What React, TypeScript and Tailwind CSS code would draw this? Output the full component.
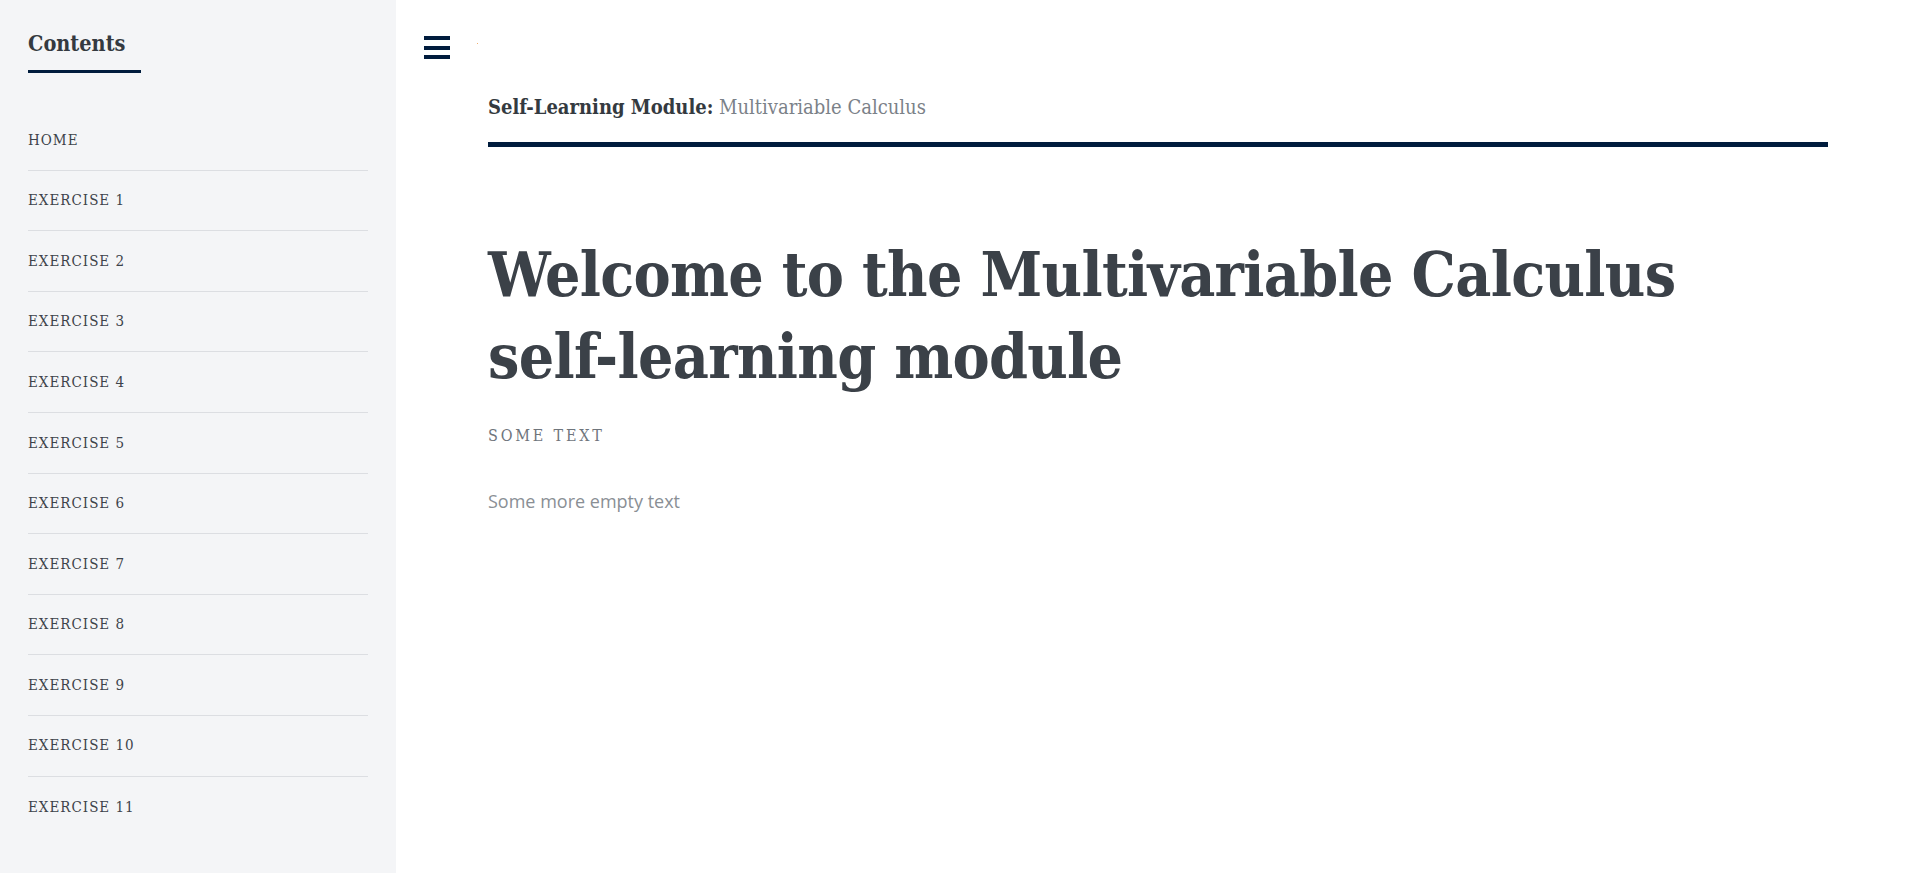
const slab = "font-['DejaVu_Serif_Condensed','DejaVu_Serif',serif]"

const items = ['Home', ...Array.from({ length: 11 }, (_, i) => `Exercise ${i + 1}`)]

export default function App() {
  return (
    <div className="min-h-screen flex bg-white">
      {/* Sidebar */}
      <aside className="w-[396px] shrink-0 bg-[#f4f5f7] px-[28px] pt-[30px]">
        <h2 className={`${slab} font-bold text-[21.5px] leading-[28px] text-[#343a40]`}>Contents</h2>
        <div className="w-[113px] h-[3px] bg-[#001c3d] mt-[12px]" />
        <nav className="mt-[37px]">
          {items.map((it) => (
            <a
              key={it}
              href="#"
              className={`${slab} flex items-center h-[60.6px] border-b border-[#dcdee2] last:border-b-0 text-[15px] uppercase tracking-[1px] text-[#3d434a]`}
            >
              {it}
            </a>
          ))}
        </nav>
      </aside>

      {/* Main */}
      <main className="flex-1 flex flex-col">
        <div className="pl-[28px] pt-[36px] flex items-start gap-[27px]">
          <button className="w-[26px] h-[23px] flex flex-col justify-between">
            <span className="block h-[4px] bg-[#001c3d]" />
            <span className="block h-[4px] bg-[#001c3d]" />
            <span className="block h-[4px] bg-[#001c3d]" />
          </button>
          <span className="block w-[1px] h-[1px] mt-[7px] bg-[#f0b070]" />
        </div>

        <div className="px-[92px]">
          <p className={`${slab} mt-[34px] text-[20px] leading-[28px] text-[#343a40]`}>
            <span className="font-bold">Self-Learning Module:</span>{' '}
            <span className="text-[#7b8188]">Multivariable Calculus</span>
          </p>
          <div className="h-[5px] bg-[#001c3d] mt-[21px]" />

          <h1 className={`${slab} mt-[87px] font-bold text-[62px] leading-[82px] tracking-[-0.7px] text-[#3b4148]`}>
            Welcome to the Multivariable Calculus
            <br />
            self-learning module
          </h1>
          <p className={`${slab} mt-[26px] text-[16px] leading-[24px] uppercase tracking-[2.8px] text-[#6f757c]`}>
            Some text
          </p>
          <p className="mt-[40px] font-['Open_Sans',sans-serif] text-[18px] leading-[27px] text-[#8a8f95]">
            Some more empty text
          </p>
        </div>
      </main>
    </div>
  )
}
